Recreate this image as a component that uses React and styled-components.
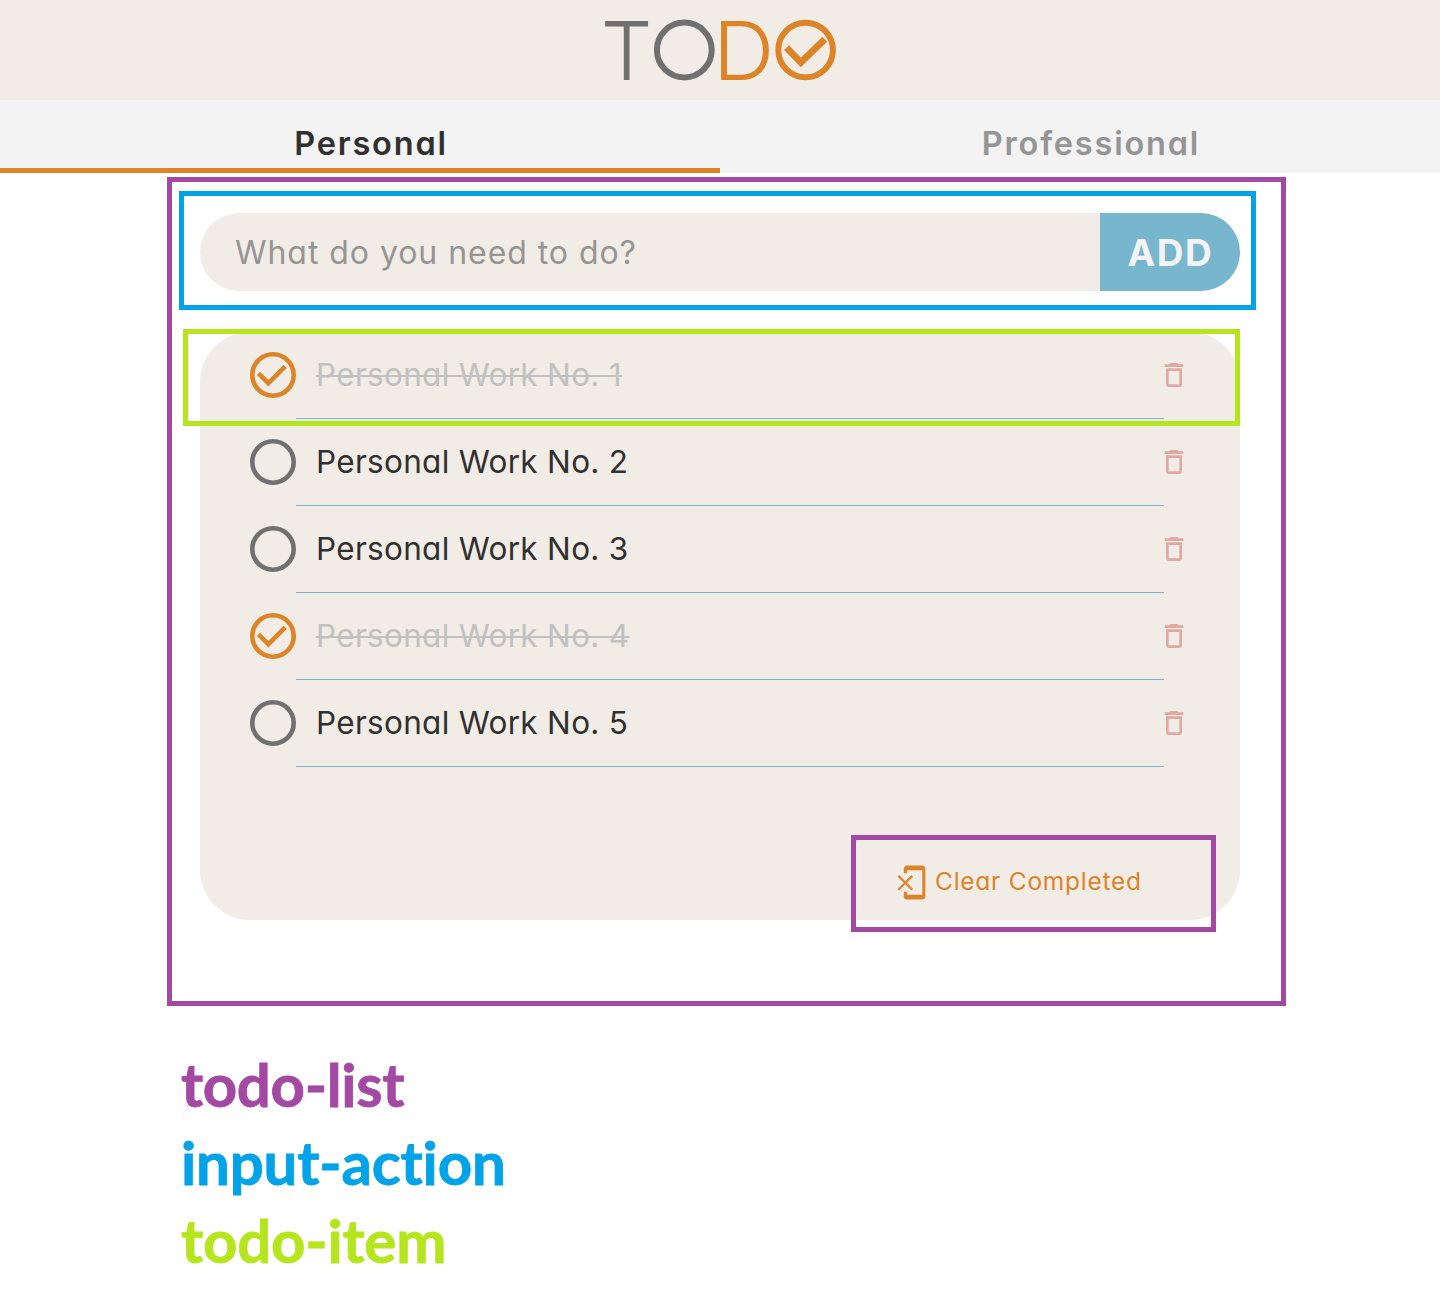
import React, { useState } from "react";
import styled, { createGlobalStyle } from "styled-components";

const c = {
  sand: "#f1ece5",
  tabs: "#f3f3f3",
  orange: "#dc8427",
  grey: "#707070",
  muted: "#959595",
  done: "#c1c1c1",
  ink: "#303030",
  blue: "#78b6ce",
  trash: "#e0a8a1",
  purple: "#a349a4",
  sky: "#00a2e8",
  lime: "#b5e61d",
};

const GlobalStyle = createGlobalStyle`
  *, *::before, *::after { box-sizing: border-box; }
  body {
    margin: 0;
    background: #fff;
    color: ${c.ink};
    font-family: Inter, "Liberation Sans", sans-serif;
    font-feature-settings: "cv11";
  }
`;

const Page = styled.div`
  min-height: 1312px;
`;

const Header = styled.header`
  display: flex;
  justify-content: center;
  align-items: center;
  height: 100px;
  background: ${c.sand};
`;

const LogoMark = styled.svg`
  display: block;
  overflow: visible;
  font-family: Lato, sans-serif;
  font-size: 81.2px;
  font-weight: 300;
`;

const LogoLetter = styled.text`
  fill: ${(p) => p.$color};
  stroke: ${(p) => p.$color};
  stroke-width: 2px;
`;

const Tabs = styled.nav`
  display: grid;
  grid-template-columns: 1fr 1fr;
  height: 73px;
  background: ${c.tabs};
`;

const Tab = styled.button`
  padding: 20px 0 0 2px;
  border: 0;
  border-bottom: 5px solid ${(p) => (p.$active ? c.orange : "transparent")};
  background: none;
  color: ${(p) => (p.$active ? c.ink : c.muted)};
  font: 600 32.5px/48px Inter, sans-serif;
  font-feature-settings: "cv11";
  letter-spacing: 1.8px;
  text-indent: 20px;
`;

const Main = styled.main`
  position: relative;
  width: 1040px;
  height: 833px;
  margin: 0 auto;
  padding-top: 40px;
`;

const Frame = styled.div`
  position: absolute;
  top: ${(p) => p.$top}px;
  right: ${(p) => p.$right}px;
  bottom: ${(p) => p.$bottom}px;
  left: ${(p) => p.$left}px;
  border: 5px solid ${(p) => p.$color};
  pointer-events: none;
`;

const InputAction = styled.form`
  position: relative;
  display: flex;
  height: 78px;
`;

const Field = styled.input`
  flex: 1;
  min-width: 0;
  padding: 0 35px;
  border: 0;
  border-radius: 39px 0 0 39px;
  background: ${c.sand};
  color: ${c.ink};
  font: 400 32px Inter, sans-serif;
  font-feature-settings: "cv11";
  letter-spacing: 0.95px;
  &::placeholder {
    color: ${c.muted};
    opacity: 1;
  }
`;

const AddButton = styled.button`
  width: 140px;
  padding: 1px 0 0 1px;
  border: 0;
  border-radius: 0 39px 39px 0;
  background: ${c.blue};
  color: ${c.tabs};
  font: 700 37px Inter, sans-serif;
  letter-spacing: 1.6px;
`;

const Card = styled.section`
  position: relative;
  display: flex;
  flex-direction: column;
  justify-content: space-between;
  height: 588px;
  margin-top: 41px;
  border-radius: 50px;
  background: ${c.sand};
`;

const List = styled.ul`
  margin: 0;
  padding: 0;
  list-style: none;
`;

const Item = styled.li`
  position: relative;
  display: flex;
  height: 87px;
  padding: 0 50px;
`;

const Check = styled.button`
  display: flex;
  align-items: center;
  padding: 0 0 1px;
  border: 0;
  background: none;
  color: ${(p) => (p.$done ? c.orange : c.grey)};
`;

const Label = styled.div`
  width: 868px;
  padding-left: 20px;
  border-bottom: 1px solid ${c.blue};
  color: ${(p) => (p.$done ? c.done : c.ink)};
  font-size: 31.5px;
  line-height: 86px;
  letter-spacing: 0.3px;
`;

const LabelText = styled.span`
  text-decoration: ${(p) => (p.$done ? "line-through" : "none")};
  text-decoration-thickness: 1.5px;
`;

const Remove = styled.button`
  display: flex;
  align-items: center;
  margin-left: -6px;
  padding: 0 0 1px;
  border: 0;
  background: none;
  color: ${c.trash};
`;

const ClearArea = styled.div`
  position: relative;
  display: flex;
  justify-content: flex-end;
  padding: 0 98px 19px 0;
`;

const ClearButton = styled.button`
  display: flex;
  align-items: center;
  gap: 5px;
  width: 249px;
  padding: 0;
  border: 0;
  background: none;
  color: ${c.orange};
  font: 400 24.5px/35px Inter, sans-serif;
  font-feature-settings: "cv11";
  letter-spacing: 0.75px;
  white-space: nowrap;
`;

const ClearText = styled.span`
  padding-bottom: 2px;
`;

const Legend = styled.div`
  padding: 40px 0 0 181px;
`;

const LegendEntry = styled.div`
  height: 78px;
  color: ${(p) => p.$color};
  font: 700 60px/77px Lato, sans-serif;
  letter-spacing: ${(p) => p.$spacing};
  -webkit-text-stroke: 0.8px ${(p) => p.$color};
`;

const Logo = () => (
  <LogoMark width="240" height="100" viewBox="600 0 240 100" role="img" aria-label="TODO">
    <LogoLetter $color={c.grey} x="605" y="79" textLength="43.2" lengthAdjust="spacingAndGlyphs">T</LogoLetter>
    <circle cx="684.3" cy="50" r="27.4" fill="none" stroke={c.grey} strokeWidth="6" />
    <LogoLetter $color={c.orange} x="714" y="79" textLength="58.5" lengthAdjust="spacingAndGlyphs">D</LogoLetter>
    <g fill="none" stroke={c.orange}>
      <circle cx="805.6" cy="50" r="27.3" strokeWidth="6" />
      <path d="M786.5 47.7 800.8 62.4 824.8 39.2" strokeWidth="6.8" />
    </g>
  </LogoMark>
);

const StatusIcon = ({ done }) => (
  <svg width="46" height="46" viewBox="2 2 20 20" fill="currentColor">
    {done && <path d="M16.59 7.58 10 14.17l-3.59-3.58L5 12l5 5 8-8z" />}
    <circle cx="12" cy="12" r="9" fill="none" stroke="currentColor" strokeWidth="2" />
  </svg>
);

const TrashIcon = () => (
  <svg width="32" height="32" viewBox="0 0 24 24" fill="currentColor">
    <path d="M6 19c0 1.1.9 2 2 2h8c1.1 0 2-.9 2-2V7H6v12zM8 9h8v10H8V9zm7.5-5-1-1h-5l-1 1H5v2h14V4h-3.5z" />
  </svg>
);

const EraseIcon = () => (
  <svg width="37" height="37" viewBox="0 0 24 24" fill="currentColor">
    <path d="m13 8.2-1-1-4 4-4-4-1 1 4 4-4 4 1 1 4-4 4 4 1-1-4-4 4-4zM19 1H9c-1.1 0-2 .9-2 2v3h2V4h10v16H9v-2H7v3c0 1.1.9 2 2 2h10c1.1 0 2-.9 2-2V3c0-1.1-.9-2-2-2z" />
  </svg>
);

const initial = [1, 2, 3, 4, 5].map((n) => ({ id: n, text: `Personal Work No. ${n}`, done: n === 1 || n === 4 }));

export default function App() {
  const [items, setItems] = useState(initial);
  const toggle = (id) => setItems(items.map((i) => (i.id === id ? { ...i, done: !i.done } : i)));
  const remove = (id) => setItems(items.filter((i) => i.id !== id));

  return (
    <Page>
      <GlobalStyle />
      <Header><Logo /></Header>
      <Tabs>
        <Tab $active>Personal</Tab>
        <Tab>Professional</Tab>
      </Tabs>
      <Main>
        <InputAction onSubmit={(e) => e.preventDefault()}>
          <Field placeholder="What do you need to do?" />
          <AddButton type="submit">ADD</AddButton>
          <Frame $color={c.sky} $top={-22} $right={-16} $bottom={-19} $left={-21} />
        </InputAction>
        <Card>
          <List>
            {items.map(({ id, text, done }, index) => (
              <Item key={id}>
                <Check $done={done} onClick={() => toggle(id)}><StatusIcon done={done} /></Check>
                <Label $done={done}><LabelText $done={done}>{text}</LabelText></Label>
                <Remove onClick={() => remove(id)}><TrashIcon /></Remove>
                {index === 0 && <Frame $color={c.lime} $top={-3} $right={0} $bottom={-7} $left={-17} />}
              </Item>
            ))}
          </List>
          <ClearArea>
            <ClearButton onClick={() => setItems(items.filter((i) => !i.done))}>
              <EraseIcon />
              <ClearText>Clear Completed</ClearText>
            </ClearButton>
            <Frame $color={c.purple} $top={-29} $right={24} $bottom={-12} $left={651} />
          </ClearArea>
        </Card>
        <Frame $color={c.purple} $top={4} $right={-46} $bottom={0} $left={-33} />
      </Main>
      <Legend>
        <LegendEntry $color={c.purple} $spacing="-0.35px">todo-list</LegendEntry>
        <LegendEntry $color={c.sky} $spacing="-0.2px">input-action</LegendEntry>
        <LegendEntry $color={c.lime} $spacing="-0.2px">todo-item</LegendEntry>
      </Legend>
    </Page>
  );
}
